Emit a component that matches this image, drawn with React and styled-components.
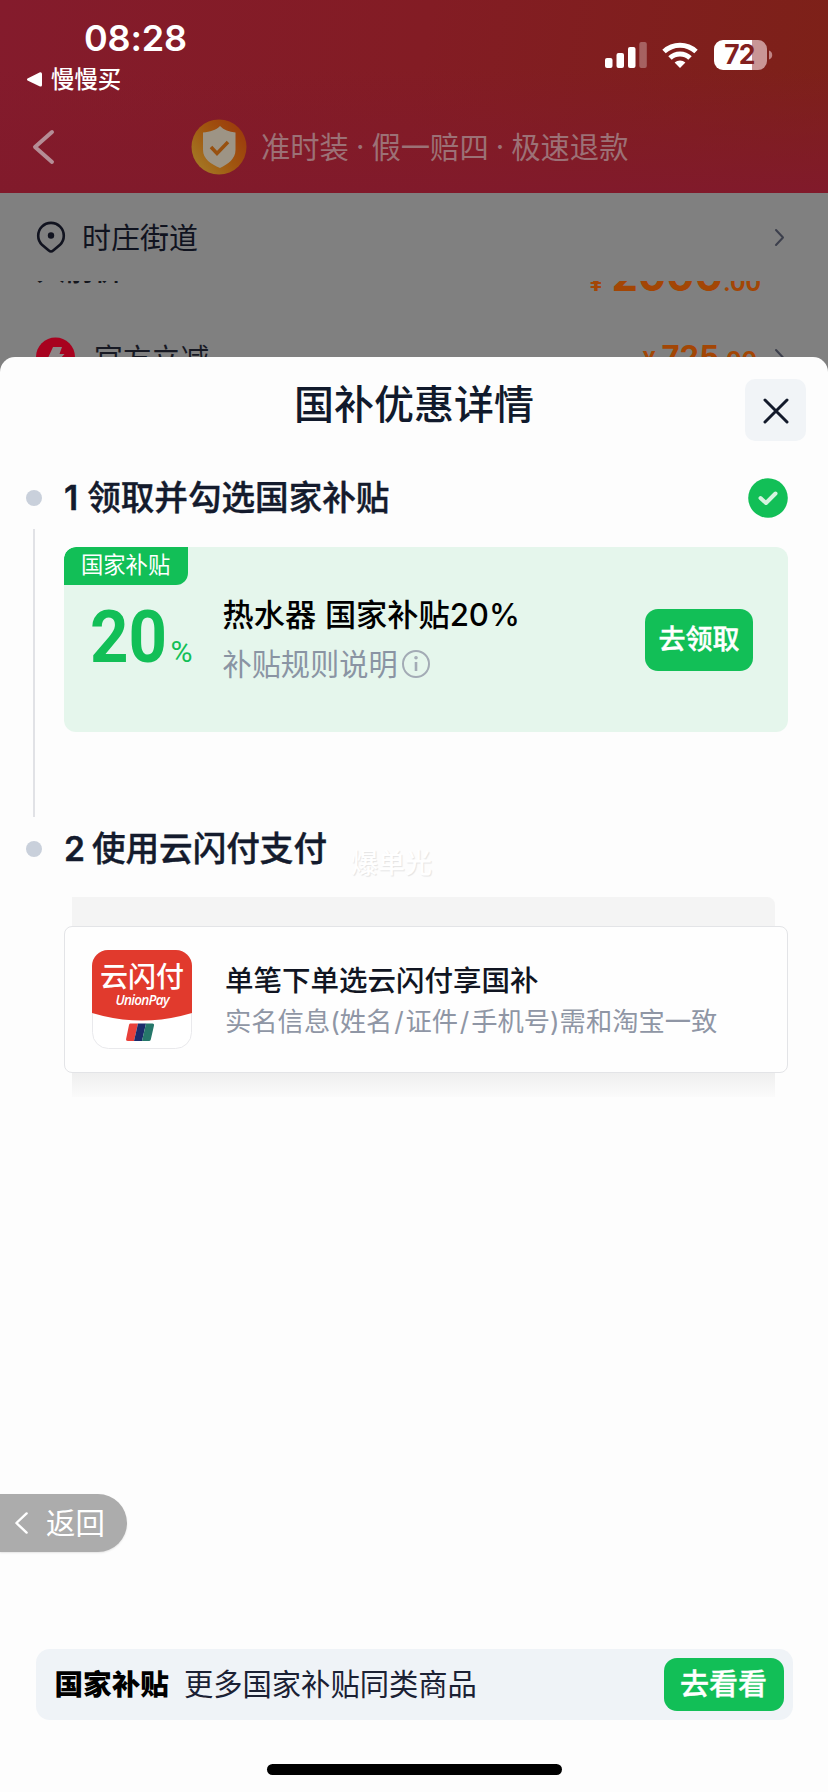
import React from 'react'
import styled, { createGlobalStyle } from 'styled-components'

const GlobalStyle = createGlobalStyle`
    * { box-sizing: border-box; }
    body {
        margin: 0;
        background: #808080;
        font-family: Inter, "Noto Sans CJK SC", sans-serif;
    }
`

const Screen = styled.div`
    position: relative;
    width: 828px;
    height: 1792px;
    overflow: hidden;
    display: flex;
    flex-direction: column;
    white-space: nowrap;
`

const TopArea = styled.header`
    height: 193px;
    flex: none;
    display: flex;
    flex-direction: column;
    background: linear-gradient(to bottom, rgba(129, 26, 43, 0) 35%, #811a2b 100%),
        linear-gradient(100deg, #841b2c 0%, #831c24 50%, #7d2118 100%);
`

const StatusBar = styled.div`
    height: 95px;
    display: flex;
    justify-content: space-between;
    color: #fff;
`

const StatusLeft = styled.div`
    padding: 15px 0 0 27px;
`

const Clock = styled.div`
    height: 46px;
    padding-left: 57px;
    font-size: 36px;
    line-height: 47px;
    font-weight: 600;
    letter-spacing: -0.2px;
`

const BackToApp = styled.div`
    display: flex;
    align-items: center;
    gap: 9px;
    height: 34px;
    font-size: 23.4px;
    font-weight: 500;

    svg { margin-top: 2px; }
`

const StatusRight = styled.div`
    display: flex;
    align-items: flex-start;
    gap: 15px;
    padding: 40px 55px 0 0;
`

const NavBar = styled.div`
    display: flex;
    align-items: center;
    height: 98px;
    padding: 5px 0 0 31px;
`

const Promise = styled.div`
    display: flex;
    align-items: center;
    margin-left: 135px;
    color: #9c7176;
`

const PromiseText = styled.span`
    display: flex;
    align-items: center;
    margin-left: 14px;
    padding-bottom: 4px;
    font-size: 29.3px;
`

const Dot = styled.span`
    width: 22.6px;
    padding-top: 3px;
    text-align: center;
`

const Address = styled.div`
    display: flex;
    align-items: center;
    height: 88px;
    flex: none;
    padding: 0 43px 0 35px;
    font-size: 29px;
    color: #10131f;

    span {
        flex: 1;
        margin-left: 15px;
        padding-bottom: 3px;
    }
`

const PriceRow = styled.div`
    display: flex;
    align-items: flex-end;
    justify-content: space-between;
    height: 10px;
    flex: none;
    overflow: hidden;
    padding: 0 67px 0 36px;
`

const OldLabel = styled.span`
    font-size: 29px;
    line-height: 30px;
    font-weight: 500;
    color: #14161d;
    margin-bottom: 5.4px;
`

const Amount = styled.span`
    display: flex;
    align-items: baseline;
    font-size: ${props => props.size}px;
    line-height: 36px;
    font-weight: 700;
    color: #a34605;
    margin-bottom: ${props => props.drop || 0}px;

    small { font-size: 23px; font-weight: 700; }
    small:first-child { margin-right: ${props => props.gap}px; }
`

const DiscountRow = styled.div`
    display: flex;
    align-items: center;
    height: 44px;
    margin-top: 44px;
    flex: none;
    padding: 0 43px 0 35px;
    font-size: 28.8px;
    color: #171923;
`

const DiscountName = styled.span`
    flex: 1;
    margin-left: 18px;
    padding-bottom: 2px;
`

const DiscountArrow = styled.span`
    display: flex;
    justify-content: flex-end;
    width: 28px;
`

const Sheet = styled.section`
    position: absolute;
    left: 0;
    top: 357px;
    width: 828px;
    height: 1435px;
    display: flex;
    flex-direction: column;
    border-radius: 15px 15px 0 0;
    background: #fdfdfd;
`

const SheetHead = styled.div`
    display: grid;
    grid-template-columns: 61px 1fr 61px;
    padding: 22px 22px 0;
    height: 111px;
`

const Title = styled.h1`
    margin: 0;
    text-align: center;
    font-size: 40px;
    line-height: 51px;
    font-weight: 500;
    color: #111a2c;
`

const Close = styled.button`
    display: flex;
    align-items: center;
    justify-content: center;
    width: 61px;
    height: 62px;
    padding: 2px 0 0;
    border: 0;
    border-radius: 10px;
    background: #f1f4f7;
`

const Step = styled.div`
    display: grid;
    grid-template-columns: 38px 1fr;
    padding: 0 40px 0 26px;
`

const Rail = styled.div`
    display: flex;
    flex-direction: column;
    align-items: flex-start;
`

const Bullet = styled.i`
    width: 16px;
    height: 16px;
    margin: 22px 0 0;
    border-radius: 50%;
    background: #c9d0db;
`

const RailLine = styled.i`
    width: 2px;
    height: 288px;
    margin: 23px 0 0 7px;
    background: #e1e2e6;
`

const StepTitle = styled.h2`
    display: flex;
    align-items: center;
    justify-content: space-between;
    margin: 0;
    height: 60px;
    font-size: 33.6px;
    line-height: 60px;
    font-weight: 500;
    -webkit-text-stroke: 0.4px #141b2d;
    color: #141b2d;

    b { margin-right: ${props => props.gap}px; font-weight: 600; }
`

const Coupon = styled.div`
    height: 185px;
    margin: 19px 0 87px;
    border-radius: 12px;
    background: #e5f6ec;
    overflow: hidden;
`

const Tag = styled.div`
    width: 124px;
    height: 38px;
    padding-left: 17px;
    border-radius: 12px 0;
    background: #12bf57;
    color: #fff;
    font-size: 22.3px;
    line-height: 36px;
`

const CouponBody = styled.div`
    display: flex;
    height: 100px;
    padding: 0 35px 0 26px;
`

const Percent = styled.div`
    display: flex;
    align-items: baseline;
    width: 132.5px;
    padding-top: 9px;
    font-family: Roboto, sans-serif;
    line-height: 87px;
    color: #12bf57;
`

const PercentValue = styled.span`
    width: 80.5px;
    font-size: 73px;
    font-weight: 700;
    transform: scaleX(0.92);
    transform-origin: left;
`

const PercentSign = styled.span`
    font-size: 30px;
`

const CouponText = styled.div`
    flex: 1;
    padding-top: 7px;
`

const CouponName = styled.div`
    height: 46px;
    font-size: 31.2px;
    line-height: 46px;
    font-weight: 500;
    word-spacing: 0.5px;
    color: #000;
`

const CouponRule = styled.div`
    display: flex;
    align-items: center;
    gap: 3px;
    height: 48px;
    font-size: 29.2px;
    color: #8a94a3;

    svg { margin-top: 4px; }
`

const GreenButton = styled.button`
    width: ${props => props.w}px;
    height: ${props => props.h}px;
    padding: 0 0 5px;
    border: 0;
    border-radius: 13px;
    background: #12bf57;
    color: #fff;
    font-family: inherit;
    font-size: ${props => props.size}px;
    font-weight: 500;
    -webkit-text-stroke: 0.4px #fff;
`

const ClaimButton = styled(GreenButton)`
    margin-top: 24px;
    flex: none;
`

const PayStack = styled.div`
    margin-top: 18px;
`

const StackEdge = styled.div`
    height: ${props => (props.bottom ? 24 : 29)}px;
    margin: 0 13px 0 8px;
    border-radius: ${props => (props.bottom ? 0 : '0 8px 0 0')};
    background: ${props => (props.bottom ? 'linear-gradient(#efefef, #fbfbfb)' : '#f4f4f4')};
`

const PayCard = styled.div`
    display: flex;
    height: 147px;
    padding: 23px 27px;
    border: 1px solid #e3e4e7;
    border-radius: 8px;
    background: #fefefe;
`

const PayText = styled.div`
    margin-left: 33px;
    padding-top: 10px;
`

const PayTitle = styled.div`
    font-size: 28.5px;
    line-height: 42px;
    font-weight: 500;
    color: #111522;
`

const PayNote = styled.div`
    font-size: 26.3px;
    line-height: 40px;
    color: #8f96a5;

    i { padding: 0 1.8px; font-style: normal; }
`

const Watermark = styled.div`
    position: absolute;
    left: 351px;
    top: 487px;
    font-size: 27px;
    line-height: 40px;
    font-weight: 500;
    color: #fff;
    text-shadow: 1px 1px 1px #e4e4e4;
`

const ReturnPill = styled.button`
    position: absolute;
    left: 0;
    top: 1137px;
    display: flex;
    align-items: center;
    gap: 17px;
    width: 127px;
    height: 58px;
    padding: 0 0 0 14px;
    border: 0;
    border-radius: 0 29px 29px 0;
    background: #acacac;
    box-shadow: 0 1px 2px rgba(0, 0, 0, 0.1);
    color: #fff;
    font-family: inherit;
    font-size: 29.4px;

    span { padding-bottom: 4px; }
`

const Footer = styled.footer`
    display: flex;
    flex-direction: column;
    align-items: center;
    margin-top: auto;
    padding: 0 36px 17px;
`

const MoreBar = styled.div`
    display: flex;
    align-items: center;
    width: 757px;
    height: 71px;
    padding: 0 9px 0 19px;
    border-radius: 14px;
    background: #eff3f7;
`

const MoreBadge = styled.strong`
    padding-bottom: 4px;
    font-size: 28.6px;
    font-weight: 900;
    color: #000;
`

const MoreText = styled.span`
    flex: 1;
    margin-left: 15px;
    padding-bottom: 5px;
    font-size: 29.3px;
    color: #1b2134;
`

const HomeBar = styled.div`
    width: 295px;
    height: 11px;
    margin-top: 44px;
    border-radius: 6px;
    background: #000;
`

function Chevron({ w, h, color, stroke, left }) {
    const d = left
        ? `M${w - stroke} ${stroke} L${stroke} ${h / 2} L${w - stroke} ${h - stroke}`
        : `M${stroke} ${stroke} L${w - stroke} ${h / 2} L${stroke} ${h - stroke}`
    return (
        <svg width={w} height={h} fill="none" stroke={color} strokeWidth={stroke} strokeLinecap="round" strokeLinejoin="round">
            <path d={d} />
        </svg>
    )
}

function StatusIcons() {
    return (
        <StatusRight>
            <svg width="42" height="30" fill="#fff">
                <rect x="0" y="18" width="7.5" height="10" rx="2" />
                <rect x="11.5" y="13" width="7.5" height="15" rx="2" />
                <rect x="23" y="7" width="7.5" height="21" rx="2" />
                <rect x="34.3" y="2" width="7.5" height="26" rx="2" opacity="0.3" />
            </svg>
            <svg width="36" height="30" viewBox="0 0 36 30" fill="none" stroke="#fff" strokeWidth="5">
                <path d="M2 11.5 A23.5 23.5 0 0 1 34 11.5" />
                <path d="M8 18 A14.5 14.5 0 0 1 28 18" />
                <path d="M18 28 L12.6 22.6 A8 8 0 0 1 23.4 22.6 Z" fill="#fff" stroke="none" />
            </svg>
            <svg width="60" height="30" overflow="visible">
                <path d="M10 0 H39 V30 H10 A9 9 0 0 1 1 21 V9 A9 9 0 0 1 10 0Z" fill="#fff" />
                <path d="M39 0 H45 A9 9 0 0 1 54 9 V21 A9 9 0 0 1 45 30 H39Z" fill="#c99696" />
                <path d="M56 10.5 C60.3 12 60.3 18 56 19.5Z" fill="#c08585" />
                <text x="26.5" y="24.3" textAnchor="middle" fontFamily="Inter" fontSize="26.5" fontWeight="700" letterSpacing="-0.8" fill="#82201f">72</text>
            </svg>
        </StatusRight>
    )
}

function ShieldIcon() {
    return (
        <svg width="56" height="56" viewBox="0 0 56 56">
            <defs>
                <linearGradient id="coin" x1="0" y1="0.8" x2="0.9" y2="0.1">
                    <stop offset="0" stopColor="#a47a26" />
                    <stop offset="0.5" stopColor="#a0560f" />
                    <stop offset="1" stopColor="#9c3a0c" />
                </linearGradient>
            </defs>
            <circle cx="28" cy="28" r="27.5" fill="url(#coin)" />
            <path d="M29 7 C33 11 38 13 44.5 13.5 V31 C44.5 40 37 45 29 49 C20 45 12 40 12 31 V13.5 C19 13 25 11 29 7Z" fill="#9d9485" />
            <path d="M20 28 L26 34.5 L37 23" fill="none" stroke="#98500f" strokeWidth="3.5" />
        </svg>
    )
}

function UnionPayLogo() {
    return (
        <svg width="100" height="99" viewBox="0 0 100 99">
            <rect x="0.5" y="0.5" width="99" height="98" rx="16" fill="#fff" stroke="#e9e9ec" />
            <path d="M0 16 A16 16 0 0 1 16 0 H84 A16 16 0 0 1 100 16 V63 Q50 78 0 63Z" fill="#e13a2d" />
            <text x="8" y="36.8" fontFamily="Noto Sans CJK SC" fontSize="28" fontWeight="500" textLength="84" fill="#fff">云闪付</text>
            <text x="23.5" y="54.5" fontFamily="Open Sans" fontSize="13.5" fontWeight="600" fontStyle="italic" textLength="54" fill="#fff">UnionPay</text>
            <path d="M38 73.5 H46 L42 91 H36 Q33.5 91 34.2 88.5 L37 75 Q37.3 73.5 38 73.5Z" fill="#e8403a" />
            <path d="M46 73.5 H54 L50 91 H42Z" fill="#1b2c6b" />
            <path d="M54 73.5 H60.5 Q62.5 73.5 62 75.5 L58.8 89.5 Q58.4 91 57 91 H50Z" fill="#26776a" />
        </svg>
    )
}

export default function App() {
    return (
        <Screen>
            <GlobalStyle />
            <TopArea>
                <StatusBar>
                    <StatusLeft>
                        <Clock>08:28</Clock>
                        <BackToApp>
                            <svg width="15" height="15" fill="#fff"><path d="M0.5 6.6 L13 0.3 Q15 0 15 2 V13 Q15 15 13 14.5 L0.5 8.4 Q-0.5 7.5 0.5 6.6Z" /></svg>
                            慢慢买
                        </BackToApp>
                    </StatusLeft>
                    <StatusIcons />
                </StatusBar>
                <NavBar>
                    <Chevron left w={25} h={38} stroke={4} color="#b58d96" />
                    <Promise>
                        <ShieldIcon />
                        <PromiseText>
                            准时装<Dot>·</Dot>假一赔四<Dot>·</Dot>极速退款
                        </PromiseText>
                    </Promise>
                </NavBar>
            </TopArea>

            <Address>
                <svg width="32" height="34" viewBox="0 0 32 34" fill="none" stroke="#11131f" strokeWidth="2.6">
                    <path d="M16 31.5 Q15 31.5 13.5 30.2 L7 24.8 A12.8 12.8 0 1 1 25 24.8 L18.5 30.2 Q17 31.5 16 31.5Z" />
                    <circle cx="16" cy="15.5" r="3.2" fill="#11131f" stroke="none" />
                </svg>
                <span>时庄街道</span>
                <Chevron w={11} h={19} stroke={2} color="#3c3f4c" />
            </Address>
            <PriceRow>
                <OldLabel>入前价</OldLabel>
                <Amount size={42} gap={9} drop={-10}>
                    <small>¥</small>2000<small>.00</small>
                </Amount>
            </PriceRow>
            <DiscountRow>
                <svg width="41" height="40" viewBox="0 0 41 40">
                    <circle cx="20.5" cy="20" r="19.5" fill="#a8021f" />
                    <path d="M18 10 H27 L24.5 17 H29.5 L16 32 L18.5 22 H12.5Z" fill="#8d8687" />
                </svg>
                <DiscountName>官方立减</DiscountName>
                <Amount size={31} gap={6} drop={-2}>
                    <small>¥</small>725<small>.00</small>
                </Amount>
                <DiscountArrow>
                    <Chevron w={11} h={19} stroke={2} color="#3c3f4c" />
                </DiscountArrow>
            </DiscountRow>

            <Sheet>
                <SheetHead>
                    <span />
                    <Title>国补优惠详情</Title>
                    <Close>
                        <svg width="26" height="26" fill="none" stroke="#131a2b" strokeWidth="3" strokeLinecap="round">
                            <path d="M2 2 L24 24 M24 2 L2 24" />
                        </svg>
                    </Close>
                </SheetHead>

                <Step>
                    <Rail>
                        <Bullet />
                        <RailLine />
                    </Rail>
                    <div>
                        <StepTitle gap={9}>
                            <span><b>1</b>领取并勾选国家补贴</span>
                            <svg width="40" height="40" fill="none">
                                <circle cx="20" cy="20" r="19.8" fill="#12bf57" />
                                <path d="M12.5 20 L18 25 L27.5 15.5" stroke="#d5f4e0" strokeWidth="4" strokeLinecap="round" strokeLinejoin="round" />
                            </svg>
                        </StepTitle>
                        <Coupon>
                            <Tag>国家补贴</Tag>
                            <CouponBody>
                                <Percent>
                                    <PercentValue>20</PercentValue>
                                    <PercentSign>%</PercentSign>
                                </Percent>
                                <CouponText>
                                    <CouponName>热水器 国家补贴20%</CouponName>
                                    <CouponRule>
                                        补贴规则说明
                                        <svg width="30" height="30" fill="none" stroke="#a3abb5" strokeWidth="2">
                                            <circle cx="15" cy="15" r="13" />
                                            <path d="M15 13 V22" strokeWidth="2.6" />
                                            <circle cx="15" cy="8.8" r="0.8" />
                                        </svg>
                                    </CouponRule>
                                </CouponText>
                                <ClaimButton w={108} h={62} size={27}>去领取</ClaimButton>
                            </CouponBody>
                        </Coupon>
                    </div>
                </Step>

                <Step>
                    <Rail>
                        <Bullet />
                    </Rail>
                    <div>
                        <StepTitle gap={7}>
                            <span><b>2</b>使用云闪付支付</span>
                        </StepTitle>
                        <PayStack>
                            <StackEdge />
                            <PayCard>
                                <UnionPayLogo />
                                <PayText>
                                    <PayTitle>单笔下单选云闪付享国补</PayTitle>
                                    <PayNote>实名信息(姓名<i>/</i>证件<i>/</i>手机号)需和淘宝一致</PayNote>
                                </PayText>
                            </PayCard>
                            <StackEdge bottom />
                        </PayStack>
                    </div>
                </Step>

                <Watermark>爆单光</Watermark>
                <ReturnPill>
                    <Chevron left w={15} h={24} stroke={2.4} color="#fff" />
                    <span>返回</span>
                </ReturnPill>

                <Footer>
                    <MoreBar>
                        <MoreBadge>国家补贴</MoreBadge>
                        <MoreText>更多国家补贴同类商品</MoreText>
                        <GreenButton w={120} h={53} size={29}>去看看</GreenButton>
                    </MoreBar>
                    <HomeBar />
                </Footer>
            </Sheet>
        </Screen>
    )
}
